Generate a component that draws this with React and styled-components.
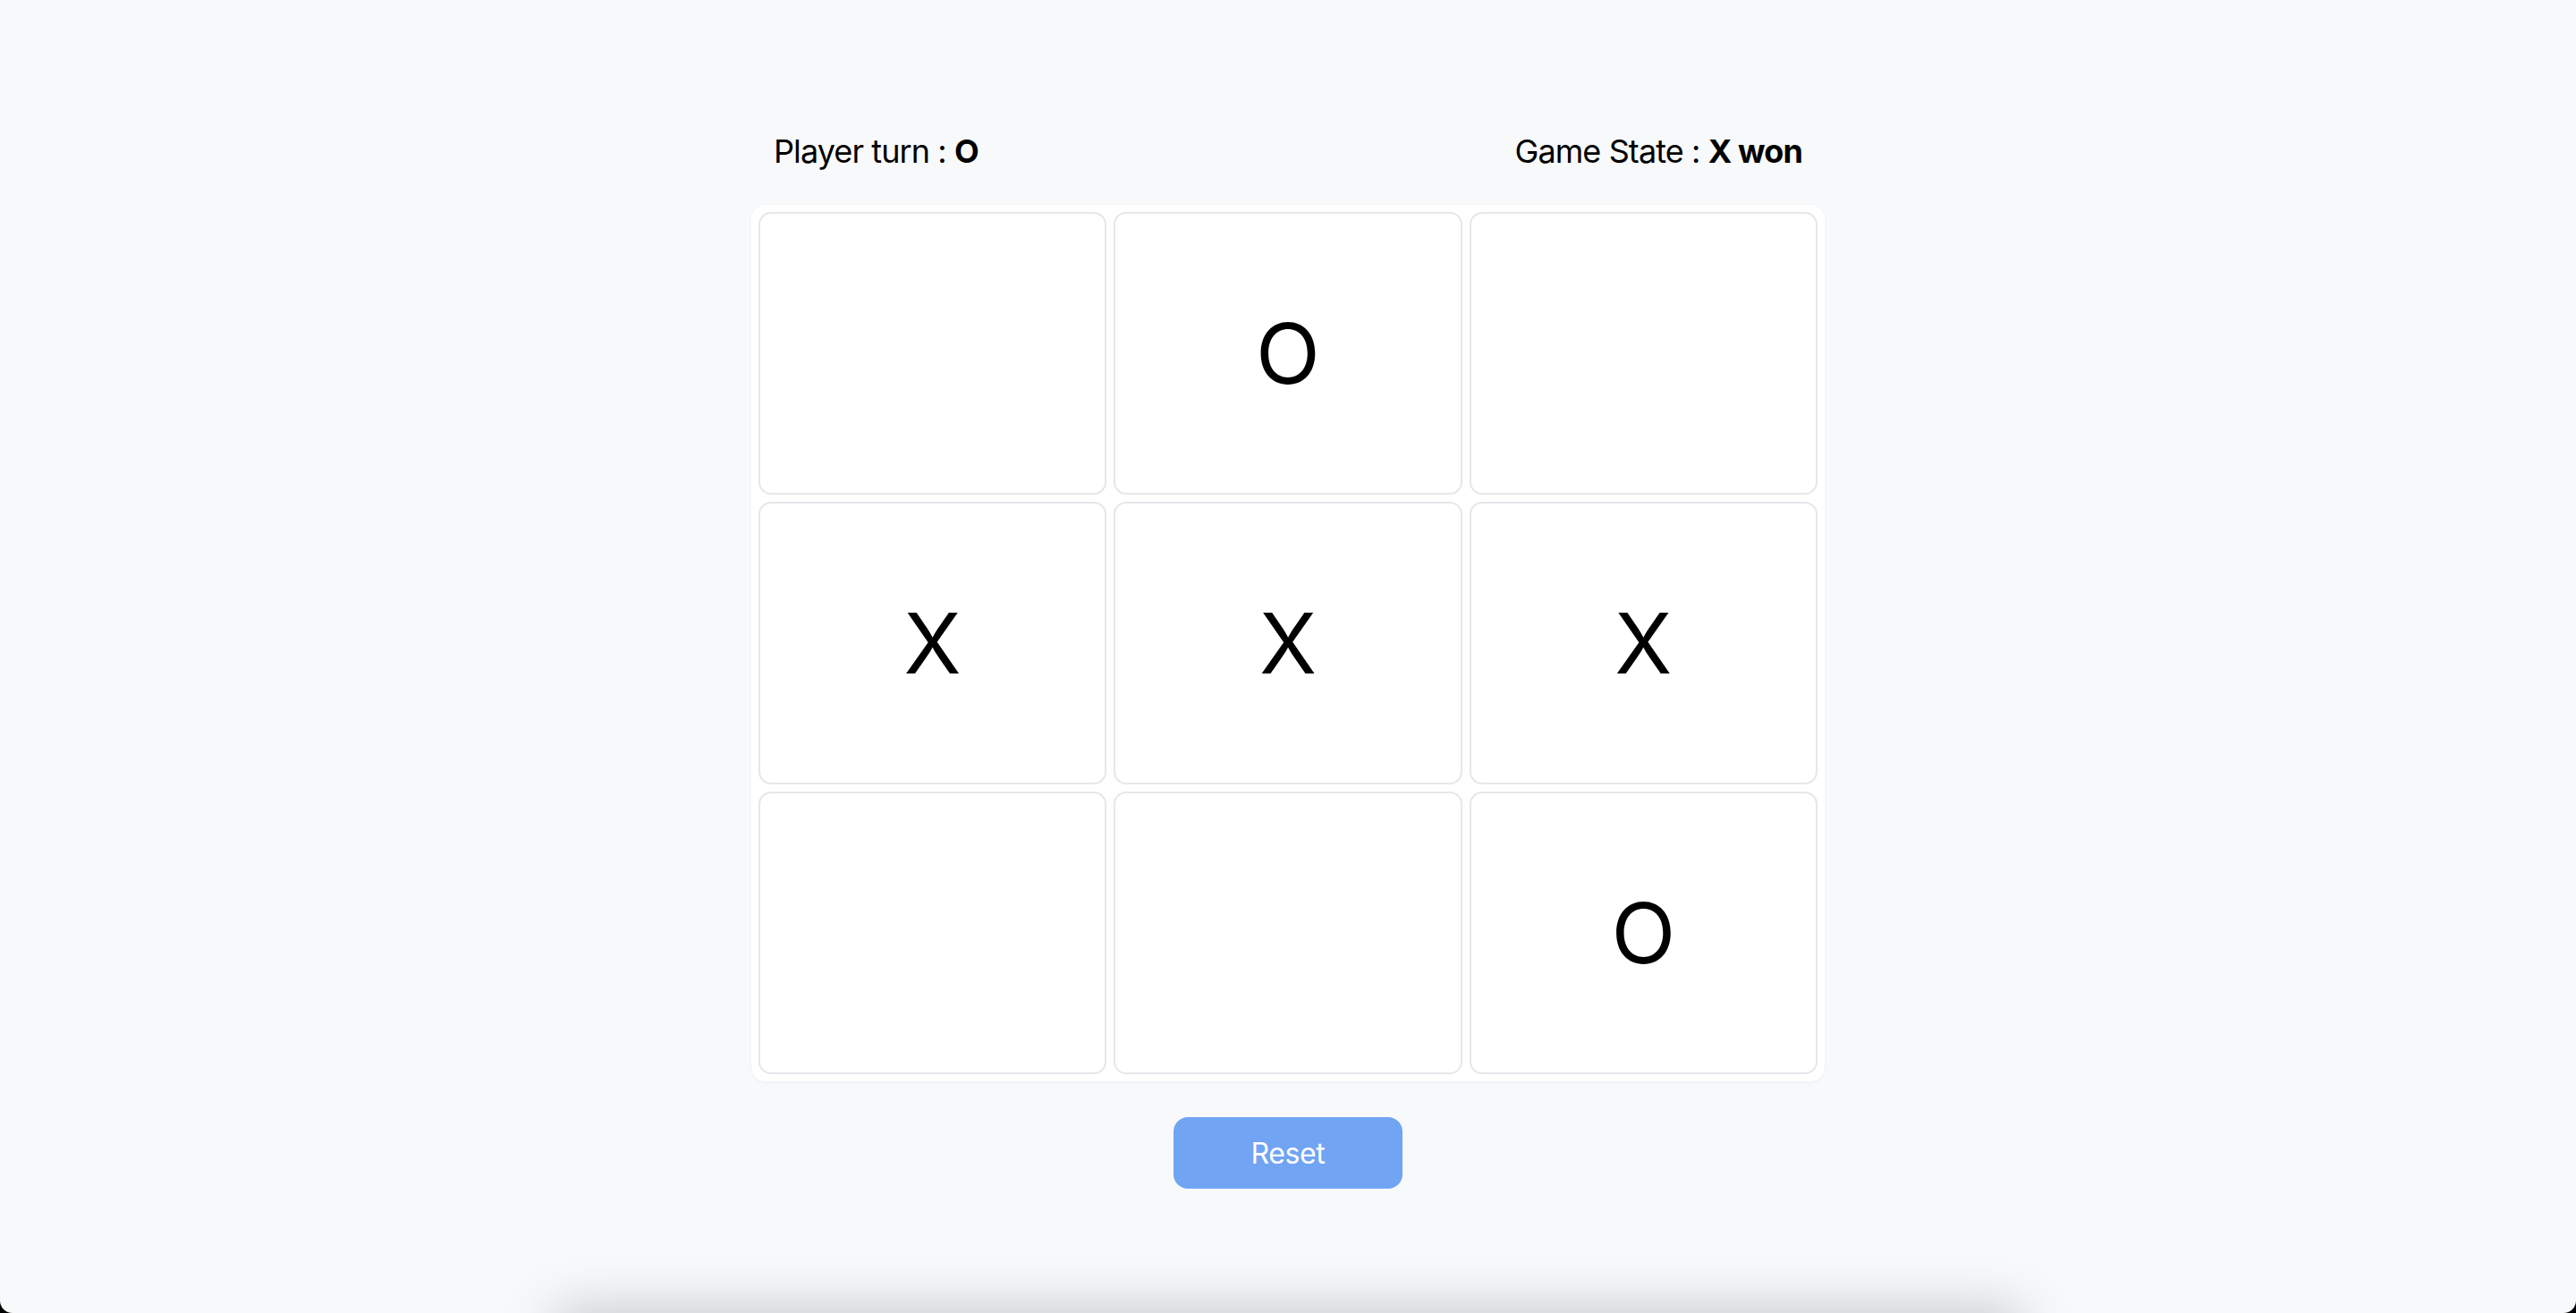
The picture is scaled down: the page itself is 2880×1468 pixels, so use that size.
import React, { useState } from "react";
import styled, { createGlobalStyle } from "styled-components";

const GlobalStyle = createGlobalStyle`
  html, body {
    margin: 0;
    padding: 0;
    background: #000;
  }
  * {
    box-sizing: border-box;
  }
`;

const Page = styled.div`
  position: relative;
  height: 100vh;
  overflow: hidden;
  background: #f8f9fa;
  border-radius: 0 0 14px 14px;
  font-family: "Inter", "Liberation Sans", sans-serif;
  color: #000;
  display: flex;
  justify-content: center;
`;

const Game = styled.div`
  width: 1200px;
  margin-top: 147px;
  display: flex;
  flex-direction: column;
  align-items: center;
`;

const Header = styled.div`
  width: 100%;
  display: flex;
  justify-content: space-between;
  align-items: center;
  padding: 0 25px;
  font-size: 36px;
  line-height: 44px;
  letter-spacing: -0.9px;
  margin-bottom: 38px;
`;

const Status = styled.div`
  white-space: nowrap;
  b {
    font-weight: 700;
  }
`;

const Board = styled.div`
  width: 100%;
  display: grid;
  grid-template-columns: repeat(3, 1fr);
  grid-auto-rows: 316px;
  gap: 8px;
  padding: 8px;
  background: #fff;
  border-radius: 16px;
  box-shadow: 0 1px 4px rgba(0, 0, 0, 0.05);
`;

const Cell = styled.button`
  display: flex;
  align-items: center;
  justify-content: center;
  background: #fff;
  border: 2px solid #e5e7eb;
  border-radius: 14px;
  font-family: "Inter", "Liberation Sans", sans-serif;
  font-size: 94px;
  font-weight: 400;
  color: #000;
  padding: 0;
  cursor: ${(p) => (p.$filled ? "default" : "pointer")};
`;

const ResetButton = styled.button`
  margin-top: 40px;
  width: 256px;
  height: 80px;
  border: none;
  border-radius: 16px;
  background: #71a4f3;
  color: #fff;
  font-family: "Inter", "Liberation Sans", sans-serif;
  font-size: 32px;
  letter-spacing: -0.4px;
  cursor: pointer;
`;

// shadow of something sitting just below the window edge
const BottomShadow = styled.div`
  position: absolute;
  left: 50%;
  bottom: -40px;
  width: 1640px;
  height: 40px;
  transform: translateX(-50%);
  box-shadow: 0 0 60px rgba(0, 0, 0, 0.26);
  background: #d8d9dc;
`;

const initial = ["", "O", "", "X", "X", "X", "", "", "O"];

const App = () => {
  const [cells, setCells] = useState(initial);
  const [turn, setTurn] = useState("O");

  const play = (i) => {
    if (cells[i]) return;
    const next = cells.slice();
    next[i] = turn;
    setCells(next);
    setTurn(turn === "X" ? "O" : "X");
  };

  return (
    <Page>
      <GlobalStyle />
      <Game>
        <Header>
          <Status>
            Player turn : <b>{turn}</b>
          </Status>
          <Status>
            Game State : <b>X won</b>
          </Status>
        </Header>
        <Board>
          {cells.map((c, i) => (
            <Cell key={i} $filled={!!c} onClick={() => play(i)}>
              {c}
            </Cell>
          ))}
        </Board>
        <ResetButton
          onClick={() => {
            setCells(Array(9).fill(""));
            setTurn("X");
          }}
        >
          Reset
        </ResetButton>
      </Game>
      <BottomShadow />
    </Page>
  );
};

export default App;
